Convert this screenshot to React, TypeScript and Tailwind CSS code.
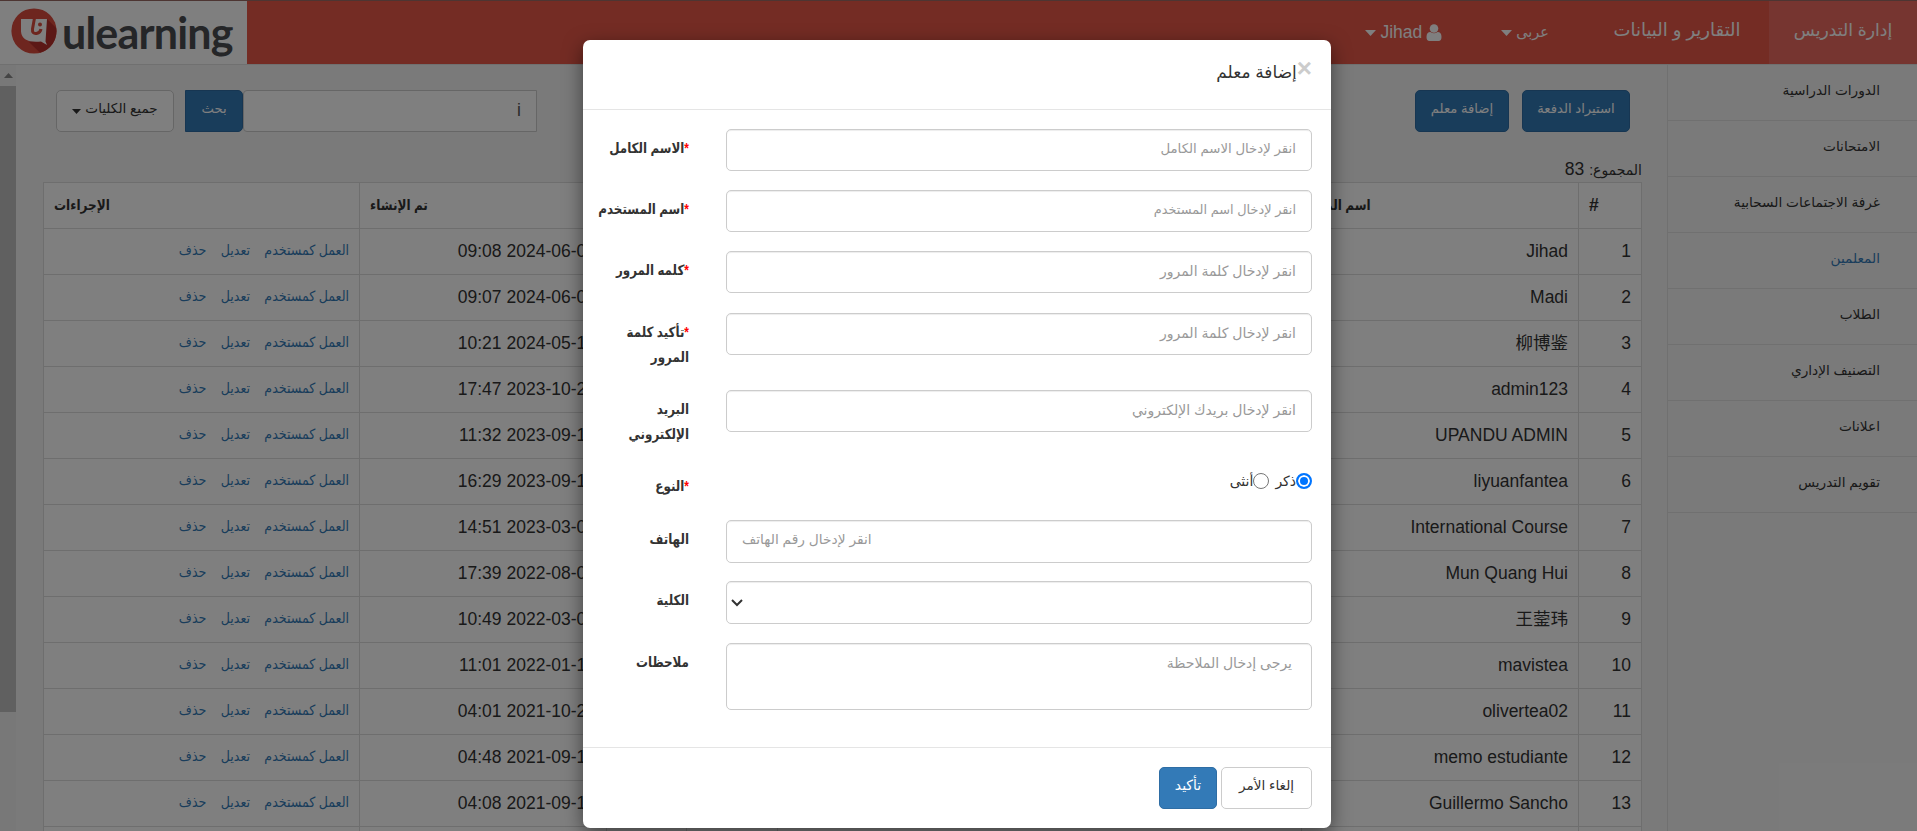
import React from "react";

const rows = [
  ["Jihad", "2024-06-07 09:08"],
  ["Madi", "2024-06-07 09:07"],
  ["柳博鉴", "2024-05-15 10:21"],
  ["admin123", "2023-10-23 17:47"],
  ["UPANDU ADMIN", "2023-09-18 11:32"],
  ["liyuanfantea", "2023-09-12 16:29"],
  ["International Course", "2023-03-07 14:51"],
  ["Mun Quang Hui", "2022-08-04 17:39"],
  ["王蓥玮", "2022-03-02 10:49"],
  ["mavistea", "2022-01-12 11:01"],
  ["olivertea02", "2021-10-21 04:01"],
  ["memo estudiante", "2021-09-15 04:48"],
  ["Guillermo Sancho", "2021-09-15 04:08"],
];

const nav = [
  "الدورات الدراسية",
  "الامتحانات",
  "غرفة الاجتماعات السحابية",
  "المعلمين",
  "الطلاب",
  "التصنيف الإداري",
  "اعلانات",
  "تقويم التدريس",
];

const blueBtn =
  "flex h-[42px] items-center justify-center rounded-[5px] border border-[#2e6da4] bg-[#337ab7] pb-[5px] text-white";

function Caret({ small }: { small?: boolean }) {
  return (
    <svg viewBox="0 0 11 6" fill="currentColor" className={"shrink-0 " + (small ? "mt-1 h-[5px] w-[9px]" : "h-1.5 w-[11px]")}>
      <path d="M0 0h11L5.500 6z" />
    </svg>
  );
}

function Logo() {
  return (
    <div dir="ltr" className="flex h-[63px] w-[247px] items-center bg-white pl-[11px]">
      <svg width="46" height="46" viewBox="0 0 46 46" className="-mt-1 shrink-0">
        <circle cx="23" cy="23" r="22.6" fill="#dc4c3e" />
        <path d="M36 11L45.200 20A22.600 22.600 0 0 1 29 44.800L18 34z" fill="#b8302c" />
        <path d="M10 11h26l-1.500 22.500 1.500 3.500-6-3.500q-19 2-20-10z" fill="#fff" />
        <path d="M23.500 10l-2 11q-.5 5 4 4.500 4-1 4.500-4.500" fill="none" stroke="#dc4c3e" strokeWidth="3" />
        <circle cx="29" cy="16.500" r="2" fill="#dc4c3e" />
      </svg>
      <span className="ml-[5px] font-['Lato'] text-[43px] font-bold leading-none tracking-[-0.8px] text-[#4a4c50]">ulearning</span>
    </div>
  );
}

function Header() {
  return (
    <header className="flex h-16 shrink-0 border-t border-[#9a6a64] bg-[#e85848] text-white">
      <div className="flex w-[148px] items-center justify-center bg-[#ec6b60] pb-1 text-[17.2px]">إدارة التدريس</div>
      <div className="flex w-[184px] items-center justify-center pb-1 text-[18px]">التقارير و البيانات</div>
      <div className="mr-[36px] flex items-center gap-1 text-[14.5px]">عربى<Caret /></div>
      <div className="mr-[59px] flex items-center gap-1 text-[17.5px]">
        <svg width="16" height="17" viewBox="0 0 15 17" fill="#fff">
          <circle cx="7.500" cy="4.500" r="4.300" />
          <path d="M0 13q0-5 4-5 3.500 2.500 7 0 4 0 4 5 0 4-3 4H3q-3 0-3-4z" />
        </svg>
        Jihad
        <Caret />
      </div>
      <div className="mr-auto"><Logo /></div>
    </header>
  );
}

function Sidebar() {
  return (
    <aside className="w-[250px] shrink-0 border-l border-[#e0e0e0] text-[13.7px] text-[#333]">
      {nav.map((n, i) => (
        <div key={n} className={"flex h-14 items-center border-b border-[#e0e0e0] pr-[37px] pb-0.5 " + (i === 3 ? "text-[#337ab7]" : "")}>
          {n}
        </div>
      ))}
    </aside>
  );
}

function Main() {
  return (
    <main className="flex min-w-0 grow flex-col overflow-hidden pl-[27px] pr-[25px] pt-[25px]">
      <div className="flex h-[42px] pl-[13px] pr-3 text-[13.2px]">
        <div className={blueBtn + " w-[108px]"}>استيراد الدفعة</div>
        <div className={blueBtn + " mr-[13px] w-[94px]"}>إضافة معلم</div>
        <div className="mr-auto flex">
          <div className="flex w-[294px] items-center rounded-l-[4px] border border-[#ccc] bg-white px-[15px] pb-0.5 text-[17.5px] text-[#555]">i</div>
          <div className={blueBtn + " w-[58px] rounded-l-none"}>بحث</div>
          <div className="mr-[11px] flex w-[118px] items-center justify-center gap-1 rounded-[5px] border border-[#ccc] bg-white pb-1 text-[13.6px] text-[#333]">
            جميع الكليات
            <Caret small />
          </div>
        </div>
      </div>
      <div className="mt-6 flex h-[26px] items-center text-[17.5px]"><span><span className="text-[14px]">المجموع:</span> 83</span></div>
      <table className="w-[1599px] table-fixed border-collapse bg-white text-[17.5px] leading-[25px]">
        <colgroup>
          <col className="w-[63px]" />
          <col className="w-[277px]" />
          <col className="w-[524px]" />
          <col className="w-[91px]" />
          <col className="w-20" />
          <col className="w-[247px]" />
          <col />
        </colgroup>
        <thead>
          <tr className="h-[46px] text-left text-[14px]">
            {["#", "اسم المعلم", "", "", "", "تم الإنشاء", "الإجراءات"].map((h, i) => (
              <th key={i} className={"border border-[#ddd] font-bold " + (i === 1 ? "pl-0.5" : "px-[10px]") + (i === 0 ? " text-[17.5px]" : "")}>
                <span className={i === 0 ? "" : "inline-block origin-left scale-x-[0.86] whitespace-nowrap"}>{h}</span>
              </th>
            ))}
          </tr>
        </thead>
        <tbody>
          {rows.map(([name, date], i) => (
            <tr key={i} className="h-[46px]">
              <td className="border border-[#ddd] px-2.5">{i + 1}</td>
              <td className="border border-[#ddd] px-2.5">{name}</td>
              <td className="border border-[#ddd]" />
              <td className="border border-[#ddd]" />
              <td className="border border-[#ddd]" />
              <td className="border border-[#ddd] px-[10px]">{date}</td>
              <td className="border border-[#ddd] px-[10px] text-[14px] text-[#337ab7]">
                <div className="flex origin-right scale-x-[0.9] gap-[16px] whitespace-nowrap pb-0.5"><a>العمل كمستخدم</a><a>تعديل</a><a>حذف</a></div>
              </td>
            </tr>
          ))}
          <tr className="h-[46px]">
            {[0, 1, 2, 3, 4, 5, 6].map((c) => (
              <td key={c} className="border border-[#ddd]" />
            ))}
          </tr>
        </tbody>
      </table>
    </main>
  );
}

function Scrollbar() {
  return (
    <div className="flex w-4 shrink-0 flex-col bg-[#f1f1f1]">
      <div className="flex h-[21px] items-center justify-center">
        <svg width="9" height="5" viewBox="0 0 9 5" fill="#8a8a8a"><path d="M0 5h9L4.500 0z" /></svg>
      </div>
      <div className="h-[626px] bg-[#c1c1c1]" />
    </div>
  );
}

const control = "w-[586px] shrink-0 rounded-[5px] border border-[#ccc] bg-white shadow-[inset_0_1px_1px_rgba(0,0,0,0.075)] text-[#999]";
const textInput = control + " h-[42px] px-[15px] leading-[38px]";

function Field({ label, req, className = "", children }: { label: React.ReactNode; req?: boolean; className?: string; children: React.ReactNode }) {
  return (
    <div className={"flex " + className}>
      {children}
      <div className="mr-[37px] w-[100px] origin-right scale-x-[0.85] whitespace-nowrap pt-[7px] text-[14px] font-bold leading-[25px] text-[#333]">
        {req && <span className="text-[#f00]">*</span>}
        {label}
      </div>
    </div>
  );
}

function Modal() {
  return (
    <div className="relative flex h-[788px] w-[748px] flex-col rounded-[7px] bg-white shadow-[0_6px_19px_rgba(0,0,0,0.5)]">
      <div className="flex h-[70px] items-start border-b border-[#e5e5e5] pr-[19px] pt-[14px] text-[#333]">
        <span className="text-[26px] font-bold leading-7 text-[#ccc]">×</span>
        <span className="text-[17px] leading-[38px]">إضافة معلم</span>
      </div>
      <div className="flex h-[638px] flex-col border-b border-[#e5e5e5] pr-[19px] pt-[19px] text-[14px]">
        <Field label="الاسم الكامل" req className="h-[61px]"><div className={textInput + " text-[13.3px]"}>انقر لإدخال الاسم الكامل</div></Field>
        <Field label="اسم المستخدم" req className="h-[61px]"><div className={textInput + " text-[12.9px]"}>انقر لإدخال اسم المستخدم</div></Field>
        <Field label="كلمه المرور" req className="h-[62px]"><div className={textInput}>انقر لإدخال كلمة المرور</div></Field>
        <Field label={<>تأكيد كلمة<br />المرور</>} req className="h-[77px]"><div className={textInput}>انقر لإدخال كلمة المرور</div></Field>
        <Field label={<>البريد<br />الإلكتروني</>} className="h-[77px]"><div className={textInput}>انقر لإدخال بريدك الإلكتروني</div></Field>
        <Field label="النوع" req className="h-[53px]">
          <div className="flex h-7 w-[586px] shrink-0 items-center text-[#333]">
            <span className="size-4 rounded-full border-2 border-[#0075ff] bg-[#0075ff] shadow-[inset_0_0_0_2px_#fff]" />
            <span>ذكر</span>
            <span className="mr-1.5 size-4 rounded-full border border-[#767676]" />
            <span>أنثى</span>
          </div>
        </Field>
        <Field label="الهاتف" className="h-[61px]"><div className={control + " h-[43px] px-[15px] text-left text-[13.8px] leading-[38px]"}>انقر لإدخال رقم الهاتف</div></Field>
        <Field label="الكلية" className="h-[62px]">
          <div className={control + " flex h-[43px] items-center justify-end pl-1"}>
            <svg width="12" height="8" viewBox="0 0 12 8" fill="none" stroke="#333" strokeWidth="2"><path d="M1 1l5 5 5-5" /></svg>
          </div>
        </Field>
        <Field label="ملاحظات"><div className={control + " h-[67px] px-[19px] leading-[38px]"}>يرجى إدخال الملاحظة</div></Field>
      </div>
      <div className="flex gap-1 pr-[19px] pt-[19px] text-[14px]">
        <div className="flex h-[42px] w-[91px] items-center justify-center rounded-[5px] border border-[#ccc] pb-1 text-[13.6px] text-[#333]">إلغاء الأمر</div>
        <div className={blueBtn + " w-[58px]"}>تأكيد</div>
      </div>
    </div>
  );
}

export default function App() {
  return (
    <div dir="rtl" className="relative h-[831px] w-[1917px] overflow-hidden bg-[#f5f5f5] font-['Liberation_Sans','DejaVu_Sans','Noto_Sans_CJK_SC',sans-serif] text-[#333]">
      <div className="flex h-full flex-col">
        <Header />
        <div className="flex min-h-0 grow border-t border-[#e0e0e0]">
          <Sidebar />
          <Main />
          <Scrollbar />
        </div>
      </div>
      <div className="absolute inset-0 flex justify-start bg-black/50 pr-[586px] pt-10">
        <Modal />
      </div>
    </div>
  );
}
